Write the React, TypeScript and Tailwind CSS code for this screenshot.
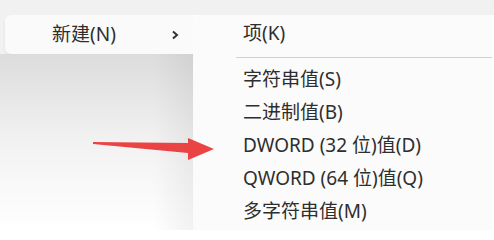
import React from "react";

const font = { fontFamily: '"Noto Sans", "Noto Sans CJK SC", sans-serif' };

export default function App() {
  const items = [
    "字符串值(S)",
    "二进制值(B)",
    "DWORD (32 位)值(D)",
    "QWORD (64 位)值(Q)",
    "多字符串值(M)",
  ];
  return (
    <div
      className="relative w-[494px] h-[236px] overflow-hidden bg-white flex flex-col text-[#2e2e2e]"
      style={font}
    >
      <div className="h-[15px] bg-[#f1f1f1] shrink-0" />
      <div className="flex h-[215px]">
        <div className="w-[193px] flex flex-col bg-gradient-to-b from-[#f1f1f1] to-white">
          <div className="bg-[#f1f1f1] pl-[5px]">
            <div className="h-[39px] rounded-l-md bg-[#fafafa] flex items-center justify-between pl-[47px] pr-[14px] text-[19px] leading-none shadow-[0_2px_3px_rgba(0,0,0,0.07)]">
              <span>新建(N)</span>
              <svg width="8" height="10" viewBox="0 0 8 10" className="mt-[1px]">
                <polyline points="2,1.5 6,5 2,8.5" fill="none" stroke="#333" strokeWidth="2" />
              </svg>
            </div>
          </div>
          <div className="flex-1 bg-gradient-to-b from-[#dcdcdc] via-[#f2f2f2] via-50% to-white relative">
            <div className="absolute inset-y-0 right-0 w-[40px] bg-gradient-to-r from-transparent to-[rgba(0,0,0,0.05)]" />
          </div>
        </div>
        <div className="flex-1 mr-[2px] bg-[#fbfbfb] rounded-tl-lg flex flex-col text-[19px] leading-none">
          <div className="h-[36px] flex items-center pl-[50px]">项(K)</div>
          <div className="h-[12px] flex items-center pl-[43px]">
            <div className="h-px w-full bg-[#d2d2d2]" />
          </div>
          {items.map((t) => (
            <div key={t} className="h-[33px] flex items-center pl-[50px] shrink-0 whitespace-nowrap">
              {t}
            </div>
          ))}
        </div>
      </div>
      <svg
        className="absolute left-0 top-0"
        width="494"
        height="236"
        viewBox="0 0 494 236"
      >
        <polygon
          points="93,142 188,143 188,138 214,149 188,160 188,153 93,144"
          fill="#e94343"
        />
      </svg>
    </div>
  );
}
